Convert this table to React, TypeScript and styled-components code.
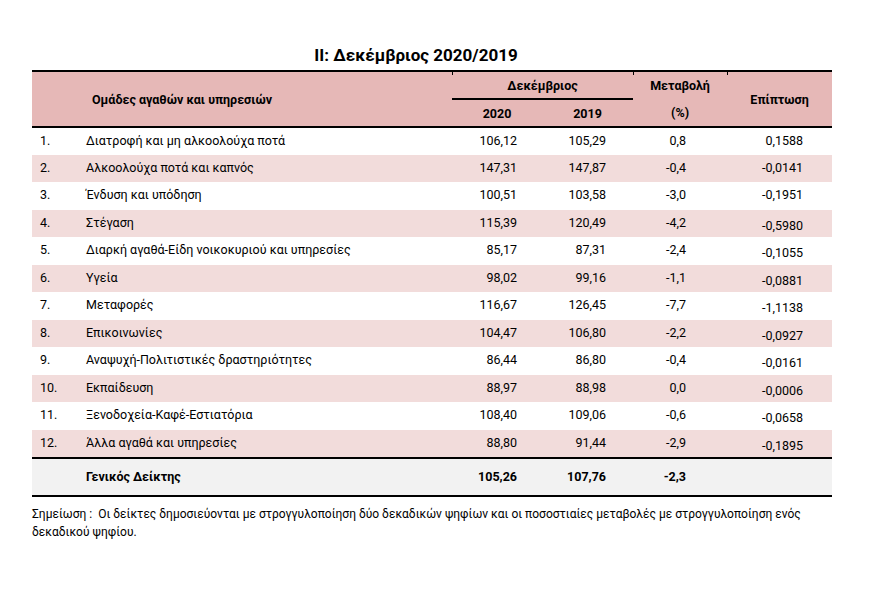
import React from 'react';
import styled, {createGlobalStyle} from 'styled-components';

const GlobalStyle = createGlobalStyle`
    body {
        margin: 0;
        background: #fff;
        font-family: Roboto, 'Noto Sans', sans-serif;
        color: #000;
    }
`;

const Page = styled.div`
    width: 882px;
    height: 600px;
    padding: 43px 0 0 32px;
    box-sizing: border-box;
`;

const Title = styled.h2`
    width: 800px;
    margin: 0 0 3px 0;
    padding-right: 32px;
    box-sizing: border-box;
    text-align: center;
    font-size: 17px;
    font-weight: 700;
    line-height: 24px;
`;

const Table = styled.table`
    width: 800px;
    border-collapse: collapse;
    table-layout: fixed;
    font-size: 12.5px;
    border-top: 2px solid #000;
    border-bottom: 2px solid #000;
`;

const HeadRow = styled.tr`
    background: #e6b8b7;
    height: 28px;
`;

const Th = styled.th<{$align?: string; $pad?: number; $tick?: boolean; $underline?: boolean}>`
    position: relative;
    font-weight: 700;
    text-align: ${(p) => p.$align || 'center'};
    padding: 0 0 0 ${(p) => p.$pad || 0}px;
    vertical-align: middle;
    border-bottom: ${(p) => (p.$underline ? '2px solid #000' : 'none')};
    &::before {
        content: '';
        display: ${(p) => (p.$tick ? 'block' : 'none')};
        position: absolute;
        left: 0;
        top: 0;
        width: 1px;
        height: 3px;
        background: #000;
    }
`;

const HeadBottom = styled.tr`
    background: #e6b8b7;
    height: 28px;
    border-bottom: 2px solid #000;
`;

const Row = styled.tr<{$shaded: boolean}>`
    background: ${(p) => (p.$shaded ? '#f2dcdb' : '#fff')};
    height: 27.5px;
`;

const Td = styled.td<{$align?: string; $padRight?: number; $padLeft?: number; $low?: boolean}>`
    text-align: ${(p) => p.$align || 'left'};
    padding: ${(p) => (p.$low ? '4px' : '0')} ${(p) => p.$padRight || 0}px 0 ${(p) => p.$padLeft || 0}px;
    vertical-align: top;
    line-height: ${(p) => (p.$low ? '23px' : '25px')};
    white-space: nowrap;
`;

const TotalRow = styled.tr`
    background: #f2f2f2;
    height: 38px;
    border-top: 2px solid #000;
    font-weight: 700;
`;

const TotalTd = styled.td<{$align?: string; $padRight?: number; $padLeft?: number}>`
    text-align: ${(p) => p.$align || 'left'};
    padding: 0 ${(p) => p.$padRight || 0}px 0 ${(p) => p.$padLeft || 0}px;
    vertical-align: middle;
`;

const Note = styled.p`
    width: 800px;
    margin: 8px 0 0 0;
    font-size: 12px;
    line-height: 18px;
`;

const rows = [
    ['Διατροφή και μη αλκοολούχα ποτά', '106,12', '105,29', '0,8', '0,1588', false],
    ['Αλκοολούχα ποτά και καπνός', '147,31', '147,87', '-0,4', '-0,0141', false],
    ['Ένδυση και υπόδηση', '100,51', '103,58', '-3,0', '-0,1951', false],
    ['Στέγαση', '115,39', '120,49', '-4,2', '-0,5980', true],
    ['Διαρκή αγαθά-Είδη νοικοκυριού και υπηρεσίες', '85,17', '87,31', '-2,4', '-0,1055', true],
    ['Υγεία', '98,02', '99,16', '-1,1', '-0,0881', true],
    ['Μεταφορές', '116,67', '126,45', '-7,7', '-1,1138', true],
    ['Επικοινωνίες', '104,47', '106,80', '-2,2', '-0,0927', true],
    ['Αναψυχή-Πολιτιστικές δραστηριότητες', '86,44', '86,80', '-0,4', '-0,0161', true],
    ['Εκπαίδευση', '88,97', '88,98', '0,0', '-0,0006', true],
    ['Ξενοδοχεία-Καφέ-Εστιατόρια', '108,40', '109,06', '-0,6', '-0,0658', true],
    ['Άλλα αγαθά και υπηρεσίες', '88,80', '91,44', '-2,9', '-0,1895', true],
] as const;

export default function App(): JSX.Element {
    return (
        <Page>
            <GlobalStyle />
            <Title>ΙΙ: Δεκέμβριος 2020/2019</Title>
            <Table>
                <colgroup>
                    <col style={{width: 54}} />
                    <col style={{width: 366}} />
                    <col style={{width: 90}} />
                    <col style={{width: 91}} />
                    <col style={{width: 94}} />
                    <col style={{width: 105}} />
                </colgroup>
                <thead>
                    <HeadRow>
                        <Th colSpan={2} rowSpan={2} $align="left" $pad={60}>
                            Ομάδες αγαθών και υπηρεσιών
                        </Th>
                        <Th colSpan={2} $tick $underline>
                            Δεκέμβριος
                        </Th>
                        <Th $tick>Μεταβολή</Th>
                        <Th rowSpan={2} $tick>
                            Επίπτωση
                        </Th>
                    </HeadRow>
                    <HeadBottom>
                        <Th>2020</Th>
                        <Th>2019</Th>
                        <Th>(%)</Th>
                    </HeadBottom>
                </thead>
                <tbody>
                    {rows.map(([name, y2020, y2019, change, effect, low], i) => (
                        <Row key={name} $shaded={i % 2 === 1}>
                            <Td $padLeft={8}>{i + 1}.</Td>
                            <Td>{name}</Td>
                            <Td $align="right" $padRight={25}>
                                {y2020}
                            </Td>
                            <Td $align="right" $padRight={27}>
                                {y2019}
                            </Td>
                            <Td $align="right" $padRight={41}>
                                {change}
                            </Td>
                            <Td $align="right" $padRight={29} $low={low}>
                                {effect}
                            </Td>
                        </Row>
                    ))}
                    <TotalRow>
                        <TotalTd />
                        <TotalTd>Γενικός Δείκτης</TotalTd>
                        <TotalTd $align="right" $padRight={25}>
                            105,26
                        </TotalTd>
                        <TotalTd $align="right" $padRight={27}>
                            107,76
                        </TotalTd>
                        <TotalTd $align="right" $padRight={41}>
                            -2,3
                        </TotalTd>
                        <TotalTd />
                    </TotalRow>
                </tbody>
            </Table>
            <Note>
                Σημείωση :&nbsp; Οι δείκτες δημοσιεύονται με στρογγυλοποίηση δύο δεκαδικών ψηφίων και οι ποσοστιαίες μεταβολές με στρογγυλοποίηση ενός
                <br />
                δεκαδικού ψηφίου.
            </Note>
        </Page>
    );
}
